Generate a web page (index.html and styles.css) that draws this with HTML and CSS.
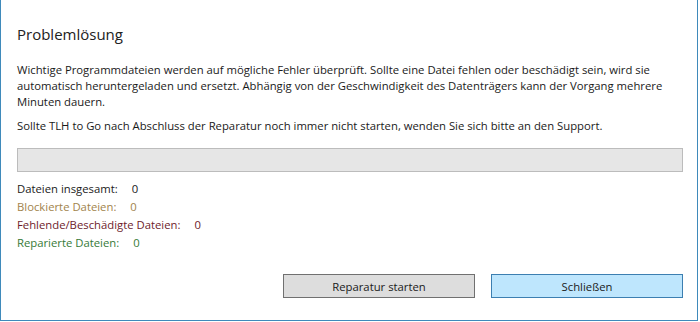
FILE: index.html
```html
<!DOCTYPE html>
<html lang="de">
<head>
    <meta charset="UTF-8">
    <title>Problemlösung</title>
    <link rel="stylesheet" href="styles.css">
</head>
<body>
    <div class="window">
        <h1 class="title">Problemlösung</h1>

        <p class="info">Wichtige Programmdateien werden auf mögliche Fehler überprüft. Sollte eine Datei fehlen oder beschädigt sein, wird sie automatisch heruntergeladen und ersetzt. Abhängig von der Geschwindigkeit des Datenträgers kann der Vorgang mehrere Minuten dauern.</p>
        <p class="info second">Sollte TLH to Go nach Abschluss der Reparatur noch immer nicht starten, wenden Sie sich bitte an den Support.</p>

        <div class="progress"><div class="progress-fill"></div></div>

        <div class="stats">
            <div class="stat"><span class="label">Dateien insgesamt:</span><span class="value">0</span></div>
            <div class="stat blocked"><span class="label">Blockierte Dateien:</span><span class="value">0</span></div>
            <div class="stat missing"><span class="label">Fehlende/Beschädigte Dateien:</span><span class="value">0</span></div>
            <div class="stat repaired"><span class="label">Reparierte Dateien:</span><span class="value">0</span></div>
        </div>

        <div class="buttons">
            <button class="btn">Reparatur starten</button>
            <button class="btn btn-default">Schließen</button>
        </div>
    </div>
</body>
</html>
```

FILE: styles.css
```css
* {
    box-sizing: border-box;
}
body {
    margin: 0;
    padding: 0;
    background-color: #ffffff;
    font-family: 'Segoe UI', 'Open Sans', 'Noto Sans', sans-serif;
    color: #1a1a1a;
}
.window {
    width: 698px;
    height: 321px;
    border-left: 1px solid #3f8abb;
    border-right: 1px solid #3f8abb;
    border-bottom: 1px solid #3f8abb;
    padding: 0 14px 0 16px;
    display: flex;
    flex-direction: column;
}
.title {
    margin: 24px 0 0 0;
    font-size: 15px;
    line-height: 20px;
    font-weight: normal;
    color: #222;
}
.info {
    margin: 18px 0 0 0;
    font-size: 11.3px;
    line-height: 16px;
}
.info.second {
    margin-top: 8px;
}
.progress {
    margin-top: 14px;
    height: 24px;
    border: 1px solid #bcbcbc;
    background-color: #e6e6e6;
}
.progress-fill {
    width: 0;
    height: 100%;
    background-color: #06b025;
}
.stats {
    margin-top: 8px;
    font-size: 11.3px;
    line-height: 18px;
}
.label {
    display: inline-block;
    margin-right: 14px;
}
.blocked {
    color: #a1834c;
}
.missing {
    color: #6e1c2b;
}
.repaired {
    color: #367a37;
}
.buttons {
    margin-top: 22px;
    display: flex;
    justify-content: flex-end;
    gap: 16px;
}
.btn {
    width: 192px;
    height: 24px;
    font-family: inherit;
    font-size: 11.3px;
    color: #1a1a1a;
    background-color: #dddddd;
    border: 1px solid #707070;
    padding: 0;
}
.btn-default {
    background-color: #bee6fd;
    border-color: #3c7fb1;
}
```
